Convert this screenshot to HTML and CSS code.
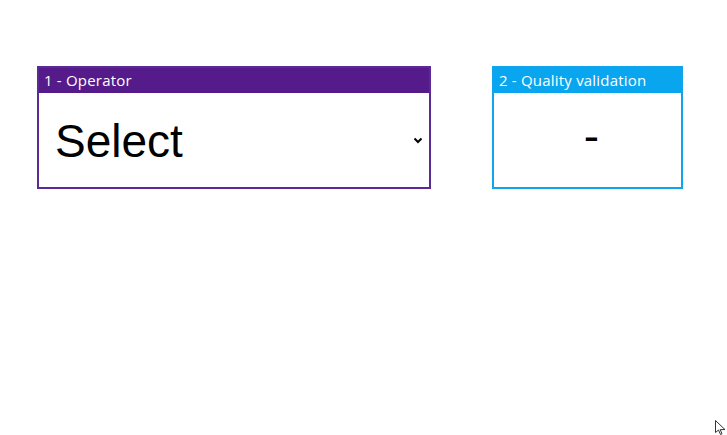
FILE: index.html
```html
<!DOCTYPE html>
<html>
<head>
<meta charset="utf-8">
<link rel="stylesheet" href="styles.css">
</head>
<body>
<div class="row">
  <div class="card card-operator">
    <div class="card-head">1 - Operator</div>
    <div class="card-body select-body">
      <span class="select-text">Select</span>
      <svg class="chev" width="10" height="7" viewBox="0 0 10 7"><path d="M1.5 1.5 L5 5 L8.5 1.5" fill="none" stroke="#000" stroke-width="2"/></svg>
    </div>
  </div>
  <div class="card card-quality">
    <div class="card-head">2 - Quality validation</div>
    <div class="card-body dash-body">
      <span class="dash">-</span>
    </div>
  </div>
</div>
<svg class="cursor" width="12" height="15" viewBox="0 0 12 15"><path d="M0.5 0.5 L0.5 12.5 L3.5 10 L5.5 14.5 L7 13.8 L5.2 9.6 L10 9.6 Z" fill="#fff" stroke="#333" stroke-width="1"/></svg>
</body>
</html>
```
FILE: styles.css
```css
html, body {
  margin: 0;
  padding: 0;
  background: #fff;
  width: 727px;
  height: 435px;
  overflow: hidden;
  position: relative;
}
.row {
  display: flex;
  gap: 61px;
  padding: 66px 0 0 37px;
}
.card {
  box-sizing: border-box;
  height: 123px;
  border: 2px solid;
  display: flex;
  flex-direction: column;
}
.card-operator {
  width: 394px;
  border-color: #5b2a94;
}
.card-quality {
  width: 191px;
  border-color: #11a4ec;
}
.card-head {
  height: 25px;
  color: #fff;
  font-family: "Open Sans", "Noto Sans", sans-serif;
  font-size: 15px;
  letter-spacing: 0.2px;
  line-height: 25px;
  padding-left: 5px;
  flex: none;
}
.card-operator .card-head { background: #561b8b; }
.card-quality .card-head { background: #0aa5ef; }
.card-body {
  flex: 1;
  display: flex;
  align-items: center;
}
.select-body {
  padding-left: 16px;
  padding-right: 6px;
  justify-content: space-between;
}
.select-text {
  font-family: "Liberation Sans", Arial, sans-serif;
  font-size: 46px;
  color: #000;
  line-height: 1;
  margin-top: 2px;
}
.dash-body {
  justify-content: center;
  padding-left: 8px;
  padding-bottom: 8px;
}
.dash {
  font-family: "Liberation Sans", Arial, sans-serif;
  font-size: 46px;
  font-weight: 500;
  color: #000;
  line-height: 1;
}
.cursor {
  position: absolute;
  left: 715px;
  top: 420px;
}
```
